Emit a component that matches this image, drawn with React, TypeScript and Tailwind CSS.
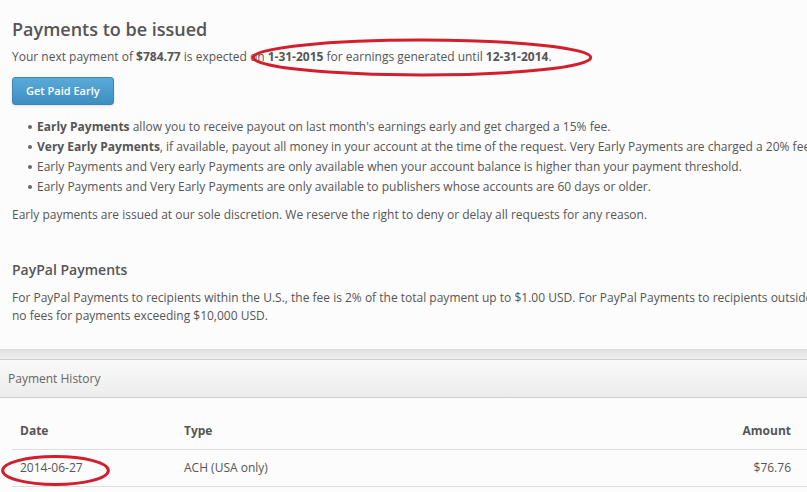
const bullets = [
  { bold: 'Early Payments', rest: " allow you to receive payout on last month's earnings early and get charged a 15% fee." },
  { bold: 'Very Early Payments', rest: ', if available, payout all money in your account at the time of the request. Very Early Payments are charged a 20% fee.' },
  { bold: '', rest: 'Early Payments and Very early Payments are only available when your account balance is higher than your payment threshold.' },
  { bold: '', rest: 'Early Payments and Very Early Payments are only available to publishers whose accounts are 60 days or older.' },
];

function Ring({ className }: { className: string }) {
  return (
    <svg className={`absolute pointer-events-none ${className}`} viewBox="0 0 100 40" preserveAspectRatio="none">
      <ellipse cx="50" cy="20" rx="48.5" ry="17" fill="none" stroke="#d21f2b" strokeWidth="3" vectorEffect="non-scaling-stroke" />
    </svg>
  );
}

export default function App() {
  return (
    <div className="relative w-[807px] h-[492px] overflow-hidden bg-[#fcfcfc] text-[#555] font-['Open_Sans',sans-serif]">
      <div className="px-3 pt-[15px] pb-6 border-b border-[#dcdcdc] whitespace-nowrap">
        <h1 className="text-[18px] leading-[28px] font-semibold text-[#555]">Payments to be issued</h1>
        <p className="mt-1 text-[12px] leading-[20px]">
          Your next payment of <b className="font-bold">$784.77</b> is expected on <b className="font-bold">1-31-2015</b> for earnings generated until <b className="font-bold">12-31-2014</b>.
        </p>
        <button className="mt-[10px] h-[28px] px-[13px] rounded-[3px] border border-[#3a86b6] bg-gradient-to-b from-[#5aaad8] to-[#3d8fc2] text-white text-[11px] font-semibold shadow-sm">
          Get Paid Early
        </button>
        <ul className="mt-3 text-[12px] leading-[20px]">
          {bullets.map((b, i) => (
            <li key={i} className="flex items-center">
              <span className="shrink-0 ml-4 mr-[5px] w-[4px] h-[4px] rounded-full bg-[#666]" />
              <span>
                {b.bold && <b className="font-bold">{b.bold}</b>}
                {b.rest}
              </span>
            </li>
          ))}
        </ul>
        <p className="mt-2 text-[12px] leading-[20px]">
          Early payments are issued at our sole discretion. We reserve the right to deny or delay all requests for any reason.
        </p>
        <h2 className="mt-[34px] text-[14px] leading-[22px] font-semibold">PayPal Payments</h2>
        <p className="mt-2 text-[12px] leading-[18px]">
          For PayPal Payments to recipients within the U.S., the fee is 2% of the total payment up to $1.00 USD. For PayPal Payments to recipients outside the U.S., the fee is 2% of the total payment up to $20.00 USD. There are
          <br />
          no fees for payments exceeding $10,000 USD.
        </p>
      </div>

      <div className="h-[10px] bg-gradient-to-b from-[#e2e2e2] to-[#efefef] border-b border-[#cfcfcf]" />

      <div className="h-[38px] flex items-center px-2 bg-gradient-to-b from-[#fafafa] to-[#ececec] border-b border-[#cfcfcf] text-[12px] text-[#666]">
        Payment History
      </div>

      <div className="ml-3 text-[12px]">
        <div className="h-[52px] flex items-end pb-[9px] border-b border-[#dedede] font-bold text-[#555]">
          <div className="w-[172px] pl-2">Date</div>
          <div className="flex-1">Type</div>
          <div className="pr-4">Amount</div>
        </div>
        <div className="h-[37px] flex items-center border-b border-[#dedede]">
          <div className="w-[172px] pl-2">2014-06-27</div>
          <div className="flex-1">ACH (USA only)</div>
          <div className="pr-4">$76.76</div>
        </div>
      </div>

      <Ring className="left-[248px] top-[37px] w-[348px] h-[41px]" />
      <Ring className="left-[1px] top-[454px] w-[109px] h-[33px]" />
    </div>
  );
}
